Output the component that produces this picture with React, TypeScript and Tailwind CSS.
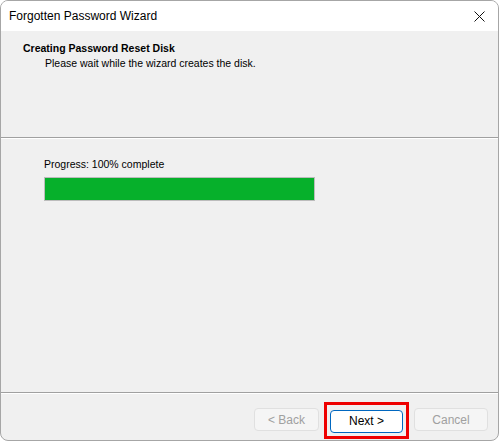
import React from 'react';

const font = { fontFamily: '"Liberation Sans", Arial, sans-serif' };

const App: React.FC = () => {
  return (
    <div className="w-[499px] h-[441px] bg-white" style={font}>
      <div className="w-[499px] h-[441px] flex flex-col border border-[#a6a6a6] rounded-[8px] overflow-hidden bg-[#f0f0f0]">
        {/* title bar */}
        <div className="h-[30px] shrink-0 bg-white flex items-center justify-between pl-[8px] pr-[12px]">
          <span className="text-[12px] text-black">Forgotten Password Wizard</span>
          <svg width="11" height="11" viewBox="0 0 11 11" className="mr-[1px]">
            <path d="M0.5 0.5 L10.5 10.5 M10.5 0.5 L0.5 10.5" stroke="#111" strokeWidth="1" />
          </svg>
        </div>

        {/* header */}
        <div className="h-[106px] shrink-0 pl-[22px] pt-[10px]">
          <h1 className="text-[10.5px] font-bold text-black leading-[14px]">Creating Password Reset Disk</h1>
          <p className="text-[10.5px] text-black leading-[14px] pl-[22px] mt-[1px]">Please wait while the wizard creates the disk.</p>
        </div>
        <div className="h-[1px] bg-[#a0a0a0] shrink-0" />
        <div className="h-[1px] bg-white shrink-0" />

        {/* content */}
        <div className="flex-1 pl-[43px] pt-[18px]">
          <p className="text-[10.5px] text-black leading-[14px]">Progress: 100% complete</p>
          <div className="mt-[6px] w-[271px] h-[24px] border border-[#bcbcbc] bg-[#06b02b]" />
        </div>

        <div className="h-[1px] bg-[#a0a0a0] shrink-0" />
        <div className="h-[1px] bg-white shrink-0" />

        {/* buttons */}
        <div className="h-[46px] shrink-0 flex items-start justify-end pr-[10px] pt-[14px] gap-[11px]">
          <button className="w-[65px] h-[23px] rounded-[4px] border border-[#e0e0e0] bg-[#f5f5f5] text-[12px] text-[#a0a0a0]">&lt; Back</button>
          <div className="border-[3px] border-[#ee0000] p-[3px] -m-[6px]">
            <button className="w-[73px] h-[23px] rounded-[4px] border border-[#0067c0] bg-white text-[12px] text-black">Next &gt;</button>
          </div>
          <button className="w-[74px] h-[23px] rounded-[4px] border border-[#e0e0e0] bg-[#f5f5f5] text-[12px] text-[#a0a0a0]">Cancel</button>
        </div>
      </div>
    </div>
  );
};

export default App;
